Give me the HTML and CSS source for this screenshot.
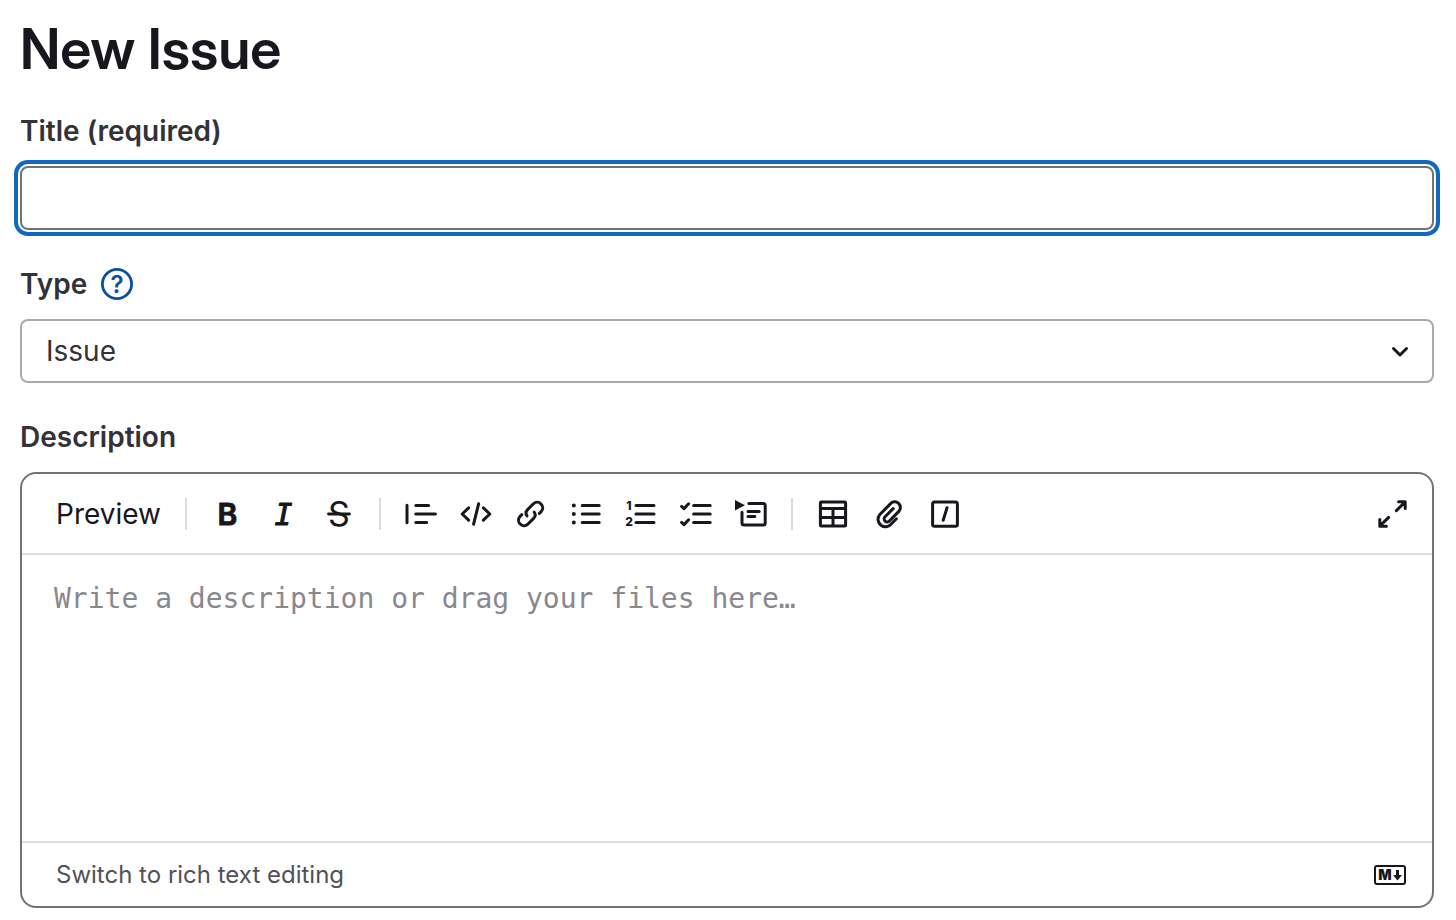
FILE: index.html
```html
<!DOCTYPE html>
<html lang="en">
  <head>
    <meta charset="UTF-8" />
    <meta name="viewport" content="width=device-width, initial-scale=1.0" />
    <title>New Issue</title>
    <link rel="stylesheet" href="styles.css">
  </head>
  <body>
    <main class="page">
      <h1>New Issue</h1>
      <form>
        <div class="field">
          <div class="label-row">
            <label for="issueTitle">Title (required)</label>
          </div>
          <input type="text" id="issueTitle" class="control title-input" required />
        </div>

        <div class="field">
          <div class="label-row">
            <label for="issueType">Type</label>
            <button type="button" class="help" aria-label="About issue types">
              <svg viewBox="0 0 32 32">
                <circle cx="16" cy="16" r="14.6" fill="none" stroke="currentColor" stroke-width="2.8" />
                <text x="16" y="25" text-anchor="middle">?</text>
              </svg>
            </button>
          </div>
          <div class="select-wrap">
            <select id="issueType" class="control">
              <option>Issue</option>
              <option>Incident</option>
            </select>
            <svg class="icon chevron" viewBox="0 0 16 16"><path d="M4.75 6.75L8 10l3.25-3.25" /></svg>
          </div>
        </div>

        <div class="field">
          <div class="label-row">
            <label for="description">Description</label>
          </div>
          <div class="editor">
            <div class="toolbar">
              <button type="button" class="preview">Preview</button>
              <span class="divider"></span>
              <div class="tools">
                <button type="button" class="tool" aria-label="Bold">
                  <svg class="icon" viewBox="0 0 32 32"><text class="glyph-bold" x="16.5" y="27" text-anchor="middle">B</text></svg>
                </button>
                <button type="button" class="tool" aria-label="Italic">
                  <svg class="icon" viewBox="0 0 32 32"><text class="glyph-italic" x="16.5" y="27" text-anchor="middle">I</text></svg>
                </button>
                <button type="button" class="tool" aria-label="Strikethrough">
                  <svg class="icon" viewBox="0 0 32 32">
                    <text class="glyph-strike" x="16" y="28" text-anchor="middle">S</text>
                    <path d="M5.5 16h21" stroke-width="2.8" />
                  </svg>
                </button>
              </div>
              <span class="divider"></span>
              <div class="tools tools-blocks">
                <button type="button" class="tool" aria-label="Insert a quote">
                  <svg class="icon" viewBox="0 0 16 16"><path d="M1 3.6v8.8M5.4 3.75h6.4M5.4 8h9.8M5.4 12.25h5.4" /></svg>
                </button>
                <button type="button" class="tool" aria-label="Insert code">
                  <svg class="icon" viewBox="0 0 16 16"><path d="M4.3 4.9L1.1 8l3.2 3.1M11.7 4.9L14.9 8l-3.2 3.1M9.3 2.9L6.8 13.1" /></svg>
                </button>
                <button type="button" class="tool" aria-label="Add a link">
                  <svg class="icon" viewBox="0 0 16 16"><path d="M6 9C5.2 7.8 5.4 6.7 6.3 5.8l2.9-2.9a2.76 2.76 0 0 1 3.9 3.9l-.9.9M3.4 8.3l-.9.9a2.76 2.76 0 0 0 3.9 3.9l2.9-2.9c.9-.9 1.1-2 .3-3.2" /></svg>
                </button>
                <button type="button" class="tool" aria-label="Add a bullet list">
                  <svg class="icon" viewBox="0 0 16 16"><path d="M6.1 3.75h8.5M6.1 8h8.5M6.1 12.25h8.5" /><path d="M1.9 3.75h.01M1.9 8h.01M1.9 12.25h.01" stroke-width="2" /></svg>
                </button>
                <button type="button" class="tool" aria-label="Add a numbered list">
                  <svg class="icon" viewBox="0 0 32 32">
                    <path class="thick" d="M11 7.5h18M11 16h18M11 24.5h18" />
                    <text class="glyph-num" x="4" y="12" text-anchor="middle">1</text>
                    <text class="glyph-num" x="4" y="28" text-anchor="middle">2</text>
                  </svg>
                </button>
                <button type="button" class="tool" aria-label="Add a checklist">
                  <svg class="icon" viewBox="0 0 16 16"><path d="M6.8 3.75h8.3M6.8 8h8.3M6.8 12.25h8.3M.8 4.2l1.2 1.1 2.3-2.4M.8 12.2L2 13.3l2.3-2.4" /></svg>
                </button>
                <button type="button" class="tool" aria-label="Add a collapsible section">
                  <svg class="icon" viewBox="0 0 16 16">
                    <path d="M6.9 2.75h7.2a1 1 0 0 1 1 1v8.7a1 1 0 0 1-1 1H4.5a1 1 0 0 1-1-1V7.1M6.5 6.8h5.6M6.5 9.3h3.4" />
                    <path class="solid" d="M0 1l5 2.6L0 6.2z" />
                  </svg>
                </button>
              </div>
              <span class="divider"></span>
              <div class="tools">
                <button type="button" class="tool" aria-label="Add a table">
                  <svg class="icon" viewBox="0 0 16 16"><path d="M2.2 2h11.6a.5.5 0 0 1 .5.5v11a.5.5 0 0 1-.5.5H2.2a.5.5 0 0 1-.5-.5v-11a.5.5 0 0 1 .5-.5zM1.7 5.3h12.6M1.7 9.7h12.6M8 5.3V14" /></svg>
                </button>
                <button type="button" class="tool" aria-label="Attach a file">
                  <svg class="icon" viewBox="0 0 16 16"><path d="M11.7 10.4l-2.5 2.5a3.7 3.7 0 0 1-5.9-4.5l5.5-5.6a2.75 2.75 0 0 1 4.1 3.9l-4.7 4.8a1.5 1.5 0 0 1-2.2-2.1l4.1-4.1" /></svg>
                </button>
                <button type="button" class="tool" aria-label="Add a quick action">
                  <svg class="icon" viewBox="0 0 16 16"><rect x="1.8" y="2" width="12.4" height="12.1" rx="1" /><path d="M9 4.9l-1.9 6.2" /></svg>
                </button>
              </div>
              <button type="button" class="tool fullscreen" aria-label="Go full screen">
                <svg class="icon" viewBox="0 0 16 16"><path d="M11.3 1.9h3.3v3.3M14.4 2.1l-4.2 4.2M1.9 10.8v3.3h3.3M2.1 13.9l4.2-4.2" /></svg>
              </button>
            </div>
            <textarea id="description" placeholder="Write a description or drag your files here…"></textarea>
            <div class="editor-footer">
              <button type="button" class="switch">Switch to rich text editing</button>
              <a href="#markdown" class="markdown" aria-label="Markdown is supported">
                <svg class="icon" viewBox="0 0 32 32">
                  <rect x="1" y="7" width="30" height="18" rx="2" stroke-width="2" />
                  <text class="glyph-md" x="11" y="21" text-anchor="middle">M</text>
                  <path class="thick" d="M23.5 11v6" stroke-linecap="butt" />
                  <path class="solid" d="M19 16h9l-4.5 5.5z" />
                </svg>
              </a>
            </div>
          </div>
        </div>
      </form>
    </main>
  </body>
</html>
```

FILE: styles.css
```css
* {
  box-sizing: border-box;
}

body {
  margin: 0;
  font-family: Inter, "Liberation Sans", sans-serif;
  font-size: 28px;
  background-color: #fff;
  color: #333238;
}

button {
  display: flex;
  align-items: center;
  padding: 0;
  border: none;
  background: none;
  font: inherit;
  color: #18171d;
  cursor: pointer;
}

.page {
  padding: 14px 22px 12px 20px;
}

h1 {
  margin: 0 0 27px;
  font-family: "Inter Display", Inter, "Liberation Sans", sans-serif;
  font-size: 56px;
  font-weight: 600;
  line-height: 70px;
  color: #18171d;
}

/* Form fields */
.field {
  margin-bottom: 34px;
}

.field:last-child {
  margin-bottom: 0;
}

.label-row {
  display: flex;
  align-items: center;
  gap: 14px;
  height: 40px;
  margin-bottom: 15px;
  font-weight: 600;
}

.help {
  color: #0b4fa0;
}

.help svg {
  display: block;
  width: 32px;
  height: 32px;
}

.help text {
  font-size: 24px;
  font-weight: 600;
  fill: currentColor;
}

.control {
  display: block;
  width: 100%;
  height: 64px;
  padding: 0 24px;
  border: 2px solid #aaa9ad;
  border-radius: 8px;
  background-color: #fff;
  font: inherit;
  color: #333238;
  appearance: none;
  outline: none;
}

.title-input {
  border-color: #737278;
  box-shadow: 0 0 0 2px #fff, 0 0 0 6px #1068bf;
}

.select-wrap {
  position: relative;
}

.chevron {
  position: absolute;
  top: 16px;
  right: 18px;
  pointer-events: none;
}

/* Icons */
.icon {
  display: block;
  width: 32px;
  height: 32px;
  fill: none;
  stroke: #18171d;
  stroke-width: 1.5;
  stroke-linecap: round;
  stroke-linejoin: round;
  overflow: visible;
}

.icon .thick {
  stroke-width: 3;
}

.icon .solid {
  fill: #18171d;
  stroke: none;
}

.icon text {
  fill: #18171d;
  stroke: none;
}

/* the outline rounds off the corners of the letters */
.icon .glyph-bold,
.icon .glyph-italic {
  stroke: #18171d;
  stroke-width: 1;
}

.glyph-bold {
  font-size: 30px;
  font-weight: 600;
}

.glyph-italic {
  font-family: "DejaVu Sans Mono", monospace;
  font-size: 30px;
  font-style: italic;
}

.glyph-strike {
  font-size: 34px;
  font-weight: 400;
}

.glyph-num {
  font-size: 12px;
  font-weight: 800;
}

.glyph-md {
  font-size: 14px;
  font-weight: 900;
}

/* Editor */
.editor {
  border: 2px solid #737278;
  border-radius: 16px;
}

.toolbar {
  display: flex;
  align-items: center;
  height: 81px;
  padding: 0 24px 0 34px;
  border-bottom: 2px solid #dcdcde;
}

.divider {
  width: 2px;
  height: 32px;
  margin: 0 24px;
  background-color: #dcdcde;
}

.tools {
  display: flex;
  gap: 24px;
}

.tools-blocks {
  gap: 23px;
}

.fullscreen {
  margin-left: auto;
}

textarea {
  display: block;
  width: 100%;
  height: 286px;
  padding: 24px 32px;
  border: none;
  outline: none;
  resize: none;
  background: none;
  font-family: "DejaVu Sans Mono", monospace;
  font-size: 28px;
  line-height: 40px;
  color: #333238;
}

textarea::placeholder {
  color: #89888d;
}

.editor-footer {
  display: flex;
  align-items: center;
  justify-content: space-between;
  height: 65px;
  padding: 0 26px 0 34px;
  border-top: 2px solid #dcdcde;
}

.switch {
  font-size: 24px;
  color: #535158;
}
```
